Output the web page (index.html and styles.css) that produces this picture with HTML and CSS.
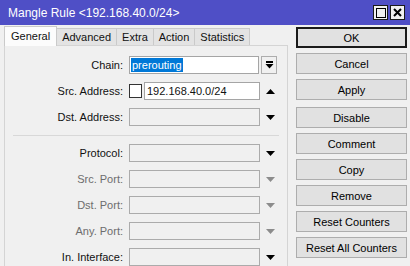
FILE: index.html
```html
<!DOCTYPE html>
<html lang="en">
<head>
<meta charset="UTF-8">
<title>Mangle Rule</title>
<link rel="stylesheet" href="styles.css">
</head>
<body>

<div class="window">
  <div class="titlebar">
    <span class="title">Mangle Rule &lt;192.168.40.0/24&gt;</span>
    <div class="win-btns">
      <span class="win-btn">
        <svg width="10" height="10" viewBox="0 0 10 10"><rect x="0.5" y="0.5" width="9" height="9" fill="none" stroke="#000"/></svg>
      </span>
      <span class="win-btn">
        <svg width="9" height="9" viewBox="0 0 9 9"><path d="M1 1L8 8M8 1L1 8" stroke="#000" stroke-width="2"/></svg>
      </span>
    </div>
  </div>

  <div class="content">
    <div class="main">
      <div class="tabs">
        <div class="tab active">General</div>
        <div class="tab">Advanced</div>
        <div class="tab">Extra</div>
        <div class="tab">Action</div>
        <div class="tab">Statistics</div>
      </div>

      <div class="panel">
        <div class="row">
          <label class="lbl">Chain:</label>
          <div class="field chain"><span class="selected">prerouting</span></div>
          <span class="drop-btn">
            <svg width="9" height="8" viewBox="0 0 9 8"><rect x="1" y="0" width="7" height="2" fill="#000"/><polygon points="0.5,3 8.5,3 4.5,7.5" fill="#000"/></svg>
          </span>
        </div>

        <div class="row">
          <label class="lbl">Src. Address:</label>
          <span class="check"></span>
          <div class="field src">192.168.40.0/24</div>
          <span class="arrow">
            <svg width="9" height="5" viewBox="0 0 9 5"><polygon points="4.5,0 9,5 0,5" fill="#000"/></svg>
          </span>
        </div>

        <div class="row">
          <label class="lbl">Dst. Address:</label>
          <div class="field off"></div>
          <span class="arrow">
            <svg width="9" height="5" viewBox="0 0 9 5"><polygon points="0,0 9,0 4.5,5" fill="#000"/></svg>
          </span>
        </div>

        <div class="separator"></div>

        <div class="row">
          <label class="lbl">Protocol:</label>
          <div class="field off"></div>
          <span class="arrow">
            <svg width="9" height="5" viewBox="0 0 9 5"><polygon points="0,0 9,0 4.5,5" fill="#000"/></svg>
          </span>
        </div>

        <div class="row disabled">
          <label class="lbl">Src. Port:</label>
          <div class="field off"></div>
          <span class="arrow">
            <svg width="9" height="5" viewBox="0 0 9 5"><polygon points="0,0 9,0 4.5,5" fill="#8c8c8c"/></svg>
          </span>
        </div>

        <div class="row disabled">
          <label class="lbl">Dst. Port:</label>
          <div class="field off"></div>
          <span class="arrow">
            <svg width="9" height="5" viewBox="0 0 9 5"><polygon points="0,0 9,0 4.5,5" fill="#8c8c8c"/></svg>
          </span>
        </div>

        <div class="row disabled">
          <label class="lbl">Any. Port:</label>
          <div class="field off"></div>
          <span class="arrow">
            <svg width="9" height="5" viewBox="0 0 9 5"><polygon points="0,0 9,0 4.5,5" fill="#8c8c8c"/></svg>
          </span>
        </div>

        <div class="row">
          <label class="lbl">In. Interface:</label>
          <div class="field off"></div>
          <span class="arrow">
            <svg width="9" height="5" viewBox="0 0 9 5"><polygon points="0,0 9,0 4.5,5" fill="#000"/></svg>
          </span>
        </div>
      </div>
    </div>

    <div class="buttons">
      <div class="btn-group">
        <button class="btn default">OK</button>
        <button class="btn">Cancel</button>
        <button class="btn">Apply</button>
      </div>
      <div class="btn-group">
        <button class="btn">Disable</button>
        <button class="btn">Comment</button>
        <button class="btn">Copy</button>
        <button class="btn">Remove</button>
        <button class="btn">Reset Counters</button>
        <button class="btn">Reset All Counters</button>
      </div>
    </div>
  </div>
</div>

</body>
</html>
```

FILE: styles.css
```css
body {
  margin: 0;
  padding: 0;
  font-family: "Liberation Sans", Arial, sans-serif;
  font-size: 11px;
  color: #111;
  background-color: #f0f0f0;
}
.window {
  width: 410px;
  height: 266px;
  overflow: hidden;
  display: flex;
  flex-direction: column;
  background-color: #f0f0f0;
}
.titlebar {
  height: 25px;
  flex-shrink: 0;
  display: flex;
  align-items: center;
  justify-content: space-between;
  padding-left: 8px;
  background-color: #4f4fc6;
  color: #fff;
  font-size: 12px;
}
.win-btns {
  display: flex;
  gap: 2px;
  padding-right: 5px;
}
.win-btn {
  width: 13px;
  height: 13px;
  display: flex;
  align-items: center;
  justify-content: center;
  border: 1px solid #1a1a1a;
  background-color: #f0f0f0;
}
.content {
  flex: 1;
  display: flex;
  padding-top: 1px;
  min-height: 0;
}
.main {
  width: 284px;
  padding-left: 4px;
  display: flex;
  flex-direction: column;
}
.tabs {
  height: 19px;
  flex-shrink: 0;
  display: flex;
  align-items: flex-end;
}
.tab {
  height: 16px;
  line-height: 16px;
  padding: 0 5px;
  border: 1px solid #cacaca;
  border-bottom: none;
  border-left: none;
  background-color: #e3e3e3;
  color: #111;
}
.tab.active {
  position: relative;
  z-index: 1;
  height: 19px;
  line-height: 19px;
  margin-bottom: -1px;
  padding: 0 6px;
  border-left: 1px solid #cacaca;
  background-color: #fcfcfc;
}
.panel {
  flex: 1;
  display: flex;
  flex-direction: column;
  gap: 8px;
  padding-top: 10px;
  border: 1px solid #d4d4d4;
  border-bottom: none;
}
.row {
  height: 18px;
  display: flex;
  align-items: center;
  flex-shrink: 0;
}
.lbl {
  width: 118px;
  margin-right: 6px;
  text-align: right;
  color: #111;
}
.row.disabled .lbl {
  color: #6d6d6d;
}
.field {
  width: 131px;
  height: 18px;
  box-sizing: border-box;
  border: 1px solid #a5a5a5;
  background-color: #fff;
  padding-left: 2px;
  line-height: 16px;
  white-space: nowrap;
  overflow: hidden;
}
.field.chain {
  width: 130px;
  padding-left: 1px;
}
.field.src {
  width: 116px;
}
.field.off {
  background-color: #f0f0f0;
  border-color: #ababab;
}
.selected {
  display: inline-block;
  line-height: 14px;
  padding: 0 1px;
  background-color: #0078d7;
  color: #fff;
}
.drop-btn {
  width: 16px;
  height: 18px;
  margin-left: 2px;
  box-sizing: border-box;
  border: 1px solid #adadad;
  background-color: #f0f0f0;
  display: flex;
  align-items: center;
  justify-content: center;
}
.check {
  width: 13px;
  height: 14px;
  margin-right: 2px;
  box-sizing: border-box;
  border: 1px solid #333;
  background-color: #fff;
}
.arrow {
  width: 20px;
  display: flex;
  justify-content: center;
}
.separator {
  height: 1px;
  margin: 1px 8px 0 8px;
  background-color: #d8d8d8;
  flex-shrink: 0;
}
.buttons {
  width: 111px;
  margin-left: 8px;
  padding-top: 1px;
  display: flex;
  flex-direction: column;
  gap: 7px;
}
.btn-group {
  display: flex;
  flex-direction: column;
  gap: 5px;
}
.btn {
  height: 21px;
  padding: 0;
  font-family: "Liberation Sans", Arial, sans-serif;
  font-size: 11px;
  color: #000;
  background-color: #e1e1e1;
  border: 1px solid #adadad;
}
.btn.default {
  border: 2px solid #1a1a1a;
}
```
